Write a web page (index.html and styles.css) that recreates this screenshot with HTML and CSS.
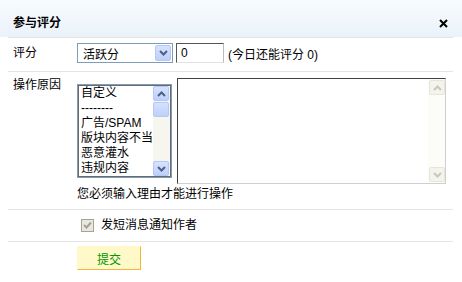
FILE: index.html
```html
<!DOCTYPE html>
<html lang="zh-CN">
<head>
    <meta charset="UTF-8">
    <title>参与评分</title>
    <link rel="stylesheet" href="styles.css">
</head>
<body>
    <div class="dialog">
        <div class="dialog-head">
            <h3>参与评分</h3>
            <a class="close" title="关闭">
                <svg width="9" height="9" viewBox="0 0 9 9">
                    <path d="M1 1 L8 8 M8 1 L1 8" stroke="#000" stroke-width="2" fill="none"/>
                </svg>
            </a>
        </div>

        <div class="dialog-body">
            <div class="row row-rate">
                <div class="label">评分</div>
                <div class="field">
                    <div class="select">
                        <span class="select-text">活跃分</span>
                        <span class="sb-btn">
                            <svg width="9" height="6" viewBox="0 0 9 6"><path d="M1 1 L4.5 4.5 L8 1" stroke="#4d6185" stroke-width="2" fill="none"/></svg>
                        </span>
                    </div>
                    <div class="text-input">0</div>
                    <span class="tip">(今日还能评分 0)</span>
                </div>
            </div>

            <div class="row row-reason">
                <div class="label">操作原因</div>
                <div class="field-col">
                    <div class="reason-boxes">
                        <div class="listbox">
                            <div class="listbox-inner">
                                <ul class="options">
                                    <li>自定义</li>
                                    <li>--------</li>
                                    <li>广告/SPAM</li>
                                    <li>版块内容不当</li>
                                    <li>恶意灌水</li>
                                    <li>违规内容</li>
                                </ul>
                                <div class="scrollbar">
                                    <span class="sb-btn">
                                        <svg width="9" height="6" viewBox="0 0 9 6"><path d="M1 5 L4.5 1.5 L8 5" stroke="#4d6185" stroke-width="2" fill="none"/></svg>
                                    </span>
                                    <span class="sb-btn sb-thumb"></span>
                                    <span class="sb-track"></span>
                                    <span class="sb-btn">
                                        <svg width="9" height="6" viewBox="0 0 9 6"><path d="M1 1 L4.5 4.5 L8 1" stroke="#4d6185" stroke-width="2" fill="none"/></svg>
                                    </span>
                                </div>
                            </div>
                        </div>
                        <div class="textarea">
                            <div class="scrollbar scrollbar-off">
                                <span class="sb-btn">
                                    <svg width="9" height="6" viewBox="0 0 9 6"><path d="M1 5 L4.5 1.5 L8 5" stroke="#c9c7ba" stroke-width="2" fill="none"/></svg>
                                </span>
                                <span class="sb-track"></span>
                                <span class="sb-btn">
                                    <svg width="9" height="6" viewBox="0 0 9 6"><path d="M1 1 L4.5 4.5 L8 1" stroke="#c9c7ba" stroke-width="2" fill="none"/></svg>
                                </span>
                            </div>
                        </div>
                    </div>
                    <p class="hint">您必须输入理由才能进行操作</p>
                </div>
            </div>

            <div class="row row-notify">
                <div class="label"></div>
                <div class="check">
                    <span class="checkbox">
                        <svg width="9" height="9" viewBox="0 0 9 9"><path d="M1 4 L3.5 6.5 L8 1.5" stroke="#a4a294" stroke-width="2" fill="none"/></svg>
                    </span>
                    发短消息通知作者
                </div>
            </div>

            <div class="row row-submit">
                <div class="label"></div>
                <button class="submit">提交</button>
            </div>
        </div>
    </div>
</body>
</html>
```

FILE: styles.css
```css
* {
    box-sizing: border-box;
    margin: 0;
    padding: 0;
}

body {
    background: #fff;
    color: #000;
    font: 12px "Liberation Sans", "Noto Sans CJK SC", sans-serif;
}

.dialog-head {
    height: 37px;
    display: flex;
    justify-content: space-between;
    align-items: flex-start;
    padding: 16px 14px 0 13px;
    background: linear-gradient(to bottom, #f8fbfe, #eaf2fa);
}

.dialog-head h3 {
    font-size: 12px;
    line-height: 14px;
    font-weight: bold;
}

.close {
    display: block;
    margin-top: 3px;
    line-height: 0;
}

.dialog-body {
    margin: 0 9px 0 8px;
}

.row {
    display: flex;
    border-top: 1px solid #e4e4e4;
}

.label {
    width: 69px;
    flex-shrink: 0;
    padding-left: 5px;
    line-height: 14px;
}

/* 评分 */
.row-rate {
    align-items: center;
    padding: 5px 0 8px;
}

.field {
    display: flex;
    align-items: center;
}

.select {
    width: 96px;
    height: 20px;
    display: flex;
    justify-content: space-between;
    align-items: center;
    padding: 1px;
    border: 1px solid #7f9db9;
}

.select-text {
    padding-left: 4px;
}

.sb-btn {
    width: 16px;
    height: 16px;
    display: flex;
    justify-content: center;
    align-items: center;
    background: linear-gradient(to bottom, #d6e2fd, #bcd0fa);
    border: 1px solid #b4c7f5;
    border-radius: 2px;
}

.text-input {
    width: 48px;
    height: 20px;
    margin-left: 3px;
    padding-left: 4px;
    line-height: 18px;
    border: 1px solid;
    border-color: #555 #bbb #e2e2e2 #555;
}

.tip {
    margin-left: 4px;
}

/* 操作原因 */
.row-reason {
    padding: 6px 0 8px;
}

.reason-boxes {
    display: flex;
    gap: 5px;
    align-items: flex-start;
}

.listbox {
    width: 95px;
    height: 94px;
    margin-top: 6px;
    border: 1px solid #7f9db9;
}

.listbox-inner {
    height: 100%;
    display: flex;
    border: 1px solid #6a6a6a;
}

.options {
    flex: 1;
    list-style: none;
    padding-left: 2px;
    line-height: 15px;
    white-space: nowrap;
    overflow: hidden;
}

.scrollbar {
    width: 17px;
    display: flex;
    flex-direction: column;
    background: #f7f6ee;
}

.scrollbar .sb-btn {
    width: 16px;
    height: 15px;
    flex-shrink: 0;
}

.sb-thumb {
    margin-top: 1px;
}

.sb-track {
    flex: 1;
}

.textarea {
    width: 269px;
    height: 106px;
    display: flex;
    justify-content: flex-end;
    border: 1px solid;
    border-color: #404040 #cfcfcf #cfcfcf #404040;
}

.scrollbar-off {
    background: #fcfcf9;
    padding: 1px 0 1px 1px;
}

.scrollbar-off .sb-btn {
    background: #f4f3ec;
    border-color: #e6e5dc;
}

.hint {
    margin-top: 3px;
    line-height: 14px;
}

/* 通知 */
.row-notify {
    padding: 8px 0 9px;
    line-height: 14px;
}

.check {
    display: flex;
    align-items: center;
}

.checkbox {
    width: 13px;
    height: 13px;
    margin: 0 7px 0 4px;
    display: flex;
    justify-content: center;
    align-items: center;
    background: #e8e8e0;
    border: 1px solid #a5a497;
}

/* 提交 */
.row-submit {
    padding-top: 4px;
}

.submit {
    width: 64px;
    height: 24px;
    background: #fff8c8;
    color: #009900;
    font: 12px "Liberation Sans", "Noto Sans CJK SC", sans-serif;
    border: 1px solid;
    border-color: #fff8c8 #f5b53c #f5b53c #fff8c8;
    cursor: pointer;
}
```
